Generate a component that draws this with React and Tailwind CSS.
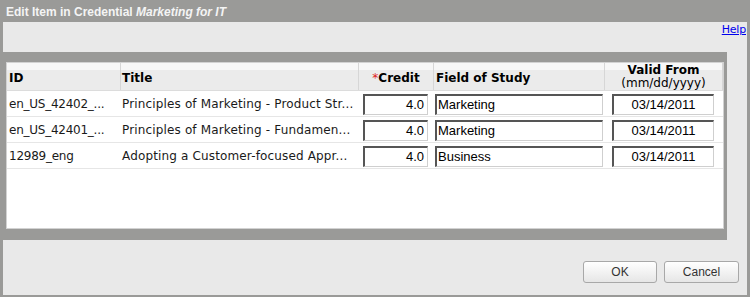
export default function App() {
  const rows = [
    { id: "en_US_42402_...", title: "Principles of Marketing - Product Str...", credit: "4.0", field: "Marketing", date: "03/14/2011" },
    { id: "en_US_42401_...", title: "Principles of Marketing - Fundamen...", credit: "4.0", field: "Marketing", date: "03/14/2011" },
    { id: "12989_eng", title: "Adopting a Customer-focused Appr...", credit: "4.0", field: "Business", date: "03/14/2011" },
  ];
  const inputCls =
    "h-[21px] bg-white border-t-2 border-l-2 border-r border-b border-t-[#555555] border-l-[#555555] border-r-[#cfcfcf] border-b-[#cfcfcf] flex items-center text-[13px] text-black leading-none tracking-normal [font-family:'Liberation_Sans',Arial,sans-serif]";
  return (
    <div className="w-[750px] h-[297px] bg-[#9a9a98] flex flex-col [font-family:'DejaVu_Sans',Verdana,sans-serif] overflow-hidden">
      <div className="h-[22px] pl-[6px] flex items-center text-[#f4f4f4] text-[12px] font-bold [font-family:'Liberation_Sans',Arial,sans-serif] pt-[1px]">
        <span>Edit Item in Credential&nbsp;</span>
        <span className="italic">Marketing for IT</span>
      </div>
      <div className="ml-[3px] mr-[3px] h-[273px] bg-[#e9e9e9] flex flex-col">
        <div className="h-[30px] flex justify-end items-start pt-[1px] pr-[1px]">
          <a href="#" className="text-[11px] text-[#0000ee] underline leading-[13px] tracking-[-0.2px]">Help</a>
        </div>
        <div className="w-[724px] h-[188px] bg-[#9a9a98] pt-[10px] pl-[3px] pr-[3px]">
          <div className="w-[718px] h-[167px] bg-white border border-[#d2d2d2] text-[12px] text-[#1a1a1a]">
            <div className="grid grid-cols-[114px_238px_75px_171px_118px] h-[28px] border-b border-[#dcdcdc] bg-[linear-gradient(to_bottom,#f7f7f7_0%,#f7f7f7_25%,#ebebeb_25%,#ebebeb_100%)] font-bold text-black">
              <div className="border-r border-[#d6d6d6] flex items-center pl-[2px] pt-[3px]">ID</div>
              <div className="border-r border-[#d6d6d6] flex items-center pl-[1px] pt-[3px]">Title</div>
              <div className="border-r border-[#d6d6d6] flex items-center justify-center pt-[3px]">
                <span className="text-[#e02020] font-normal">*</span>Credit
              </div>
              <div className="border-r border-[#d6d6d6] flex items-center pl-[2px] pt-[3px]">Field of Study</div>
              <div className="border-r border-[#d6d6d6] flex flex-col items-center justify-center leading-[13px]">
                <span>Valid From</span>
                <span className="font-normal">(mm/dd/yyyy)</span>
              </div>
            </div>
            {rows.map((r, i) => (
              <div key={i} className="grid grid-cols-[114px_238px_75px_171px_118px] h-[26px] border-b border-[#e6e6e6] items-center">
                <div className="pl-[2px] whitespace-nowrap tracking-[-0.25px]">{r.id}</div>
                <div className="pl-[1px] whitespace-nowrap overflow-hidden tracking-[0.15px]">{r.title}</div>
                <div className="pl-[4px] pt-[1px]">
                  <div className={inputCls + " w-[65px] justify-end pr-[3px]"}>{r.credit}</div>
                </div>
                <div className="pl-[1px] pt-[1px]">
                  <div className={inputCls + " w-[168px] pl-[1px]"}>{r.field}</div>
                </div>
                <div className="pl-[7px] pt-[1px]">
                  <div className={inputCls + " w-[102px] justify-center"}>{r.date}</div>
                </div>
              </div>
            ))}
          </div>
        </div>
        <div className="flex-1 flex justify-end items-start pt-[21px] pr-[8px] gap-[7px] [font-family:'Liberation_Sans',Arial,sans-serif] text-[12px] text-[#333333]">
          <button className="w-[74px] h-[22px] rounded-[3px] border border-[#a8a8a8] bg-[linear-gradient(to_bottom,#ffffff,#e6e6e6)] flex items-center justify-center">OK</button>
          <button className="w-[75px] h-[22px] rounded-[3px] border border-[#a8a8a8] bg-[linear-gradient(to_bottom,#ffffff,#e6e6e6)] flex items-center justify-center">Cancel</button>
        </div>
      </div>
    </div>
  );
}
